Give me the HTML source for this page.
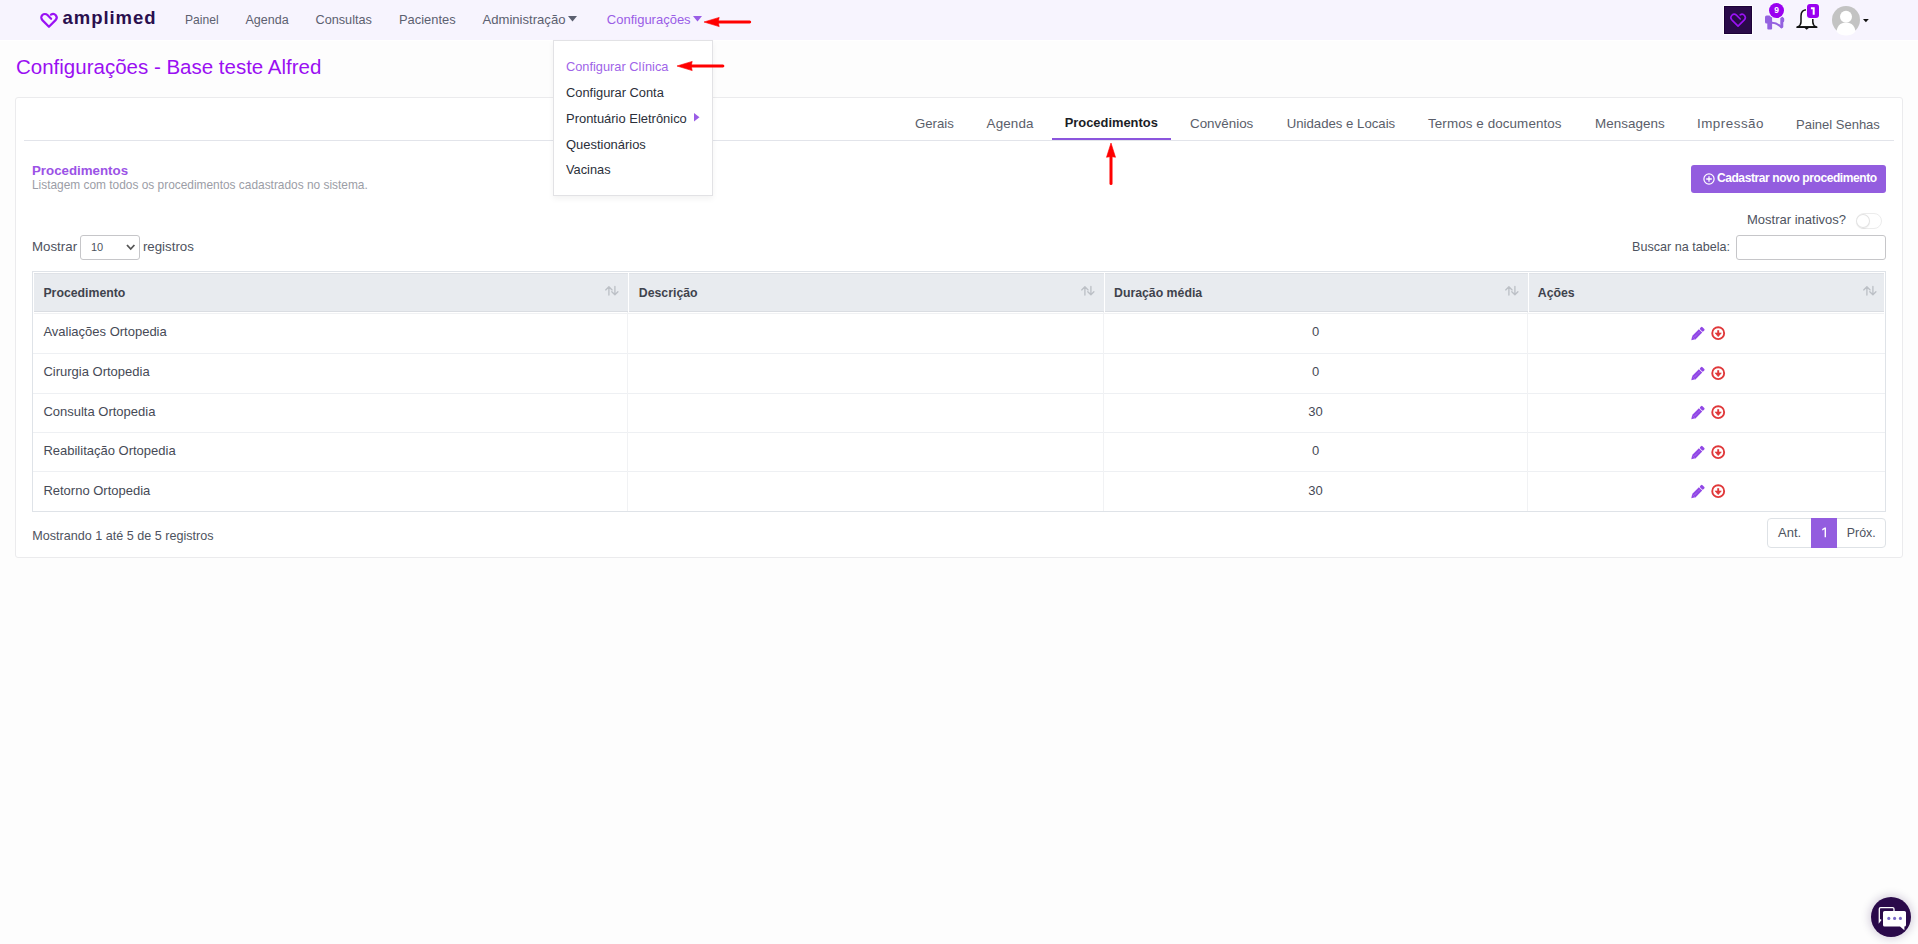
<!DOCTYPE html>
<html><head><meta charset="utf-8">
<style>
*{box-sizing:border-box;margin:0;padding:0}
html,body{width:1918px;height:944px;overflow:hidden;background:#fdfdfd;font-family:"Liberation Sans",sans-serif}
body{position:relative}
.t{position:absolute;white-space:nowrap;line-height:1}
.r{position:absolute}
svg{position:absolute;overflow:visible}
</style></head><body>
<div class="r" style="left:0px;top:0px;width:1918px;height:40px;background:#f7f4fe"></div>
<div class="r" style="left:0px;top:40px;width:1918px;height:1px;background:#ffffff"></div>
<svg style="left:36px;top:9px" width="26" height="22" viewBox="36 9 26 22"><path d="M51.12 18.73 L47.45 15.05 A3.6 3.6 0 0 0 42.35 20.15 L48.95 26.74 L55.55 20.15 A3.6 3.6 0 0 0 50.94 14.65" fill="none" stroke="#9a12f4" stroke-width="2.2" stroke-linecap="round" stroke-linejoin="round"/></svg>
<div class="t" style="left:62.5px;top:9.14px;font-size:18.5px;color:#2a0f4e;font-weight:bold;letter-spacing:0.95px;">amplimed</div>
<div class="t" style="left:185px;top:13.76px;font-size:12.1px;color:#5c6070;">Painel</div>
<div class="t" style="left:245.5px;top:13.92px;font-size:12.5px;color:#5c6070;">Agenda</div>
<div class="t" style="left:315.5px;top:13.75px;font-size:12.7px;color:#5c6070;">Consultas</div>
<div class="t" style="left:399px;top:13.58px;font-size:12.9px;color:#5c6070;">Pacientes</div>
<div class="t" style="left:482.5px;top:12.91px;font-size:13.1px;color:#5c6070;">Administração</div>
<div class="t" style="left:606.8px;top:13.00px;font-size:13px;color:#9a5de6;">Configurações</div>
<svg style="left:568px;top:16px" width="9" height="6"><path d="M0 0 L9 0 L4.5 5.5 Z" fill="#5c6070"/></svg>
<svg style="left:692.5px;top:16px" width="9" height="6"><path d="M0 0 L9 0 L4.5 5.5 Z" fill="#9a5de6"/></svg>
<svg style="left:701.8px;top:15.399999999999999px" width="53.200000000000045" height="14" viewBox="701.8 15.399999999999999 53.200000000000045 14"><path d="M703.8 22.4 L719.0 17.799999999999997 L718.0 22.4 L719.0 27.0 Z" fill="#ff0000" stroke="#ff0000" stroke-width="0.6" stroke-linejoin="round"/><path d="M715.8 22.4 L749.5 22.4" stroke="#ff0000" stroke-width="3" stroke-linecap="round"/></svg>
<div class="r" style="left:1723px;top:5px;width:30px;height:30px;background:#fff;border-radius:1px"></div>
<div class="r" style="left:1724px;top:6px;width:28px;height:28px;background:#2a0a4a;border:1px solid #1c0038"></div>
<svg style="left:1726px;top:9px" width="24" height="22" viewBox="1726 9 24 22"><path d="M1740.25 18.98 L1736.43 15.17 A3.3 3.3 0 0 0 1731.77 19.83 L1738.05 26.12 L1744.33 19.83 A3.3 3.3 0 0 0 1740.11 14.80" fill="none" stroke="#9a12f4" stroke-width="1.6" stroke-linecap="round" stroke-linejoin="round"/></svg>
<svg style="left:1764.5px;top:14.5px" width="20" height="16" viewBox="0 0 20 16"><rect x="0" y="0.6" width="7.1" height="7.9" rx="1.6" fill="#9461e0"/><rect x="2.3" y="6" width="4.8" height="8.4" rx="0.9" fill="#9461e0"/><path d="M7 7.7 Q12.5 8 16.4 12.4" fill="none" stroke="#9461e0" stroke-width="2" stroke-linecap="round"/><path d="M7 2 L16 -0.5" fill="none" stroke="#9461e0" stroke-width="1.9"/><rect x="15.3" y="1.5" width="3" height="11.6" rx="1.4" fill="#9461e0"/><rect x="17" y="2.8" width="2.2" height="4.4" rx="1.1" fill="#9461e0"/></svg>
<div class="r" style="left:1768px;top:2px;width:17px;height:17px;border-radius:50%;background:#f8f5fd"></div>
<div class="r" style="left:1769px;top:3px;width:15px;height:15px;border-radius:50%;background:#9a00f0"></div>
<div class="t" style="left:1576.6px;width:400px;text-align:center;top:6.10px;font-size:8.5px;color:#fff;font-weight:bold;">9</div>
<svg style="left:1796px;top:9px" width="22" height="22" viewBox="1796 9 22 22"><path d="M1807 9.8 C1803 9.8 1801 12.5 1801 16 L1801 22 C1801 24.6 1799.6 26 1797.6 27.1 L1816.2 27.1 C1814.2 26 1812.8 24.6 1812.8 22 L1812.8 16 C1812.8 12.5 1811 9.8 1807 9.8 Z" fill="#fff" stroke="#111" stroke-width="1.5" stroke-linejoin="round"/><path d="M1797.2 27.2 L1816.6 27.2" stroke="#111" stroke-width="1.8" stroke-linecap="round"/><path d="M1804.6 28 L1808.8 28 L1806.7 29.8 Z" fill="#111"/></svg>
<div class="r" style="left:1806px;top:3px;width:14px;height:16px;border-radius:3.5px;background:#fbf9fe"></div>
<div class="r" style="left:1807px;top:4px;width:12px;height:14px;border-radius:3px;background:#9a00f0"></div>
<svg style="left:1807px;top:4px" width="12" height="14" viewBox="1807 4 12 14"><path d="M1810.9 7.3 L1814.7 7.3 L1814.7 14.7 L1812.7 14.7 L1812.7 9.2 L1810.9 9.2 Z" fill="#fff"/></svg>
<svg style="left:1832px;top:6px" width="28" height="28" viewBox="0 0 28 28"><circle cx="14" cy="14" r="14" fill="#c3c3c3"/><circle cx="14" cy="10.8" r="6" fill="#fff"/><path d="M4.5 25.5 C5.5 18 10 16.8 14 16.8 C18 16.8 22.5 18 23.5 25.5 C21 28.5 17 29.5 14 29.5 C11 29.5 7 28.5 4.5 25.5 Z" fill="#fff"/></svg>
<svg style="left:1863px;top:19px" width="6" height="4"><path d="M0 0 L5.8 0 L2.9 3.2 Z" fill="#111"/></svg>
<div class="t" style="left:16px;top:56.65px;font-size:20.5px;color:#9a0ff2;">Configurações - Base teste Alfred</div>
<div class="r" style="left:15px;top:97px;width:1888px;height:461px;background:#fff;border:1px solid #ebebed;border-radius:3px"></div>
<div class="r" style="left:24px;top:140px;width:1870px;height:1px;background:#e2e4ea"></div>
<div class="t" style="left:915px;top:117.43px;font-size:13.2px;color:#5a5e6a;">Gerais</div>
<div class="t" style="left:986.6px;top:117.26px;font-size:13.4px;color:#5a5e6a;letter-spacing:0.15px;">Agenda</div>
<div class="t" style="left:1190px;top:117.26px;font-size:13.4px;color:#5a5e6a;">Convênios</div>
<div class="t" style="left:1286.7px;top:117.43px;font-size:13.2px;color:#5a5e6a;">Unidades e Locais</div>
<div class="t" style="left:1428px;top:117.26px;font-size:13.4px;color:#5a5e6a;letter-spacing:0.1px;">Termos e documentos</div>
<div class="t" style="left:1595px;top:117.26px;font-size:13.4px;color:#5a5e6a;letter-spacing:0.05px;">Mensagens</div>
<div class="t" style="left:1697px;top:117.26px;font-size:13.4px;color:#5a5e6a;letter-spacing:0.5px;">Impressão</div>
<div class="t" style="left:1796px;top:117.60px;font-size:13px;color:#5a5e6a;">Painel Senhas</div>
<div class="t" style="left:1064.7px;top:117.38px;font-size:12.9px;color:#1b1d26;font-weight:bold;">Procedimentos</div>
<div class="r" style="left:1052px;top:138px;width:119px;height:2px;background:#8b55dd"></div>
<div class="t" style="left:32px;top:164.04px;font-size:13.3px;color:#9b52e6;font-weight:bold;">Procedimentos</div>
<div class="t" style="left:32px;top:179.93px;font-size:11.9px;color:#9b9da6;">Listagem com todos os procedimentos cadastrados no sistema.</div>
<div class="r" style="left:1691px;top:165px;width:195px;height:28px;background:#935ddf;border-radius:3px"></div>
<svg style="left:1702.5px;top:172.6px" width="12" height="12" viewBox="0 0 12 12"><circle cx="6" cy="6" r="5.1" fill="none" stroke="#fff" stroke-width="1.2"/><path d="M6 3.2 L6 8.8 M3.2 6 L8.8 6" stroke="#fff" stroke-width="1.3"/></svg>
<div class="t" style="left:1716.9px;top:172.14px;font-size:12px;color:#fff;font-weight:bold;letter-spacing:-0.4px;">Cadastrar novo procedimento</div>
<svg style="left:1104.4px;top:141px" width="14" height="48" viewBox="1104.4 141 14 48"><path d="M1111.4 143 L1106.9 157.3 L1111.4 156.5 L1115.9 157.3 Z" fill="#ff0000" stroke="#ff0000" stroke-width="0.6" stroke-linejoin="round"/><path d="M1111.4 154 L1111.4 183.5" stroke="#ff0000" stroke-width="3" stroke-linecap="round"/></svg>
<div class="t" style="left:1747px;top:212.80px;font-size:13px;color:#4e5360;">Mostrar inativos?</div>
<div class="r" style="left:1856px;top:213px;width:26px;height:16px;border:1px solid #ececec;border-radius:8px;background:#fff"></div>
<div class="r" style="left:1856px;top:214px;width:14px;height:14px;border-radius:50%;background:#fff;box-shadow:0 0 0 1px #e2e2e2 inset,0 1px 1px rgba(0,0,0,.06)"></div>
<div class="t" style="left:32px;top:240.24px;font-size:13.3px;color:#4e5360;">Mostrar</div>
<div class="r" style="left:80px;top:235px;width:60px;height:25px;border:1px solid #c6c6c9;border-radius:3px;background:#fff"></div>
<div class="t" style="left:91px;top:241.69px;font-size:11px;color:#4e5360;">10</div>
<svg style="left:125.5px;top:244px" width="10" height="7"><path d="M1 1 L4.7 5 L8.4 1" fill="none" stroke="#555" stroke-width="1.8"/></svg>
<div class="t" style="left:142.9px;top:239.74px;font-size:13.3px;color:#4e5360;">registros</div>
<div class="t" style="left:1632px;top:241.13px;font-size:12.6px;color:#4e5360;">Buscar na tabela:</div>
<div class="r" style="left:1736px;top:235px;width:150px;height:25px;border:1px solid #c6c6c9;border-radius:3px;background:#fff"></div>
<div class="r" style="left:32px;top:271px;width:1854px;height:241px;border:1px solid #dfe3e8;background:#fff"></div>
<div class="r" style="left:34px;top:273px;width:594px;height:39px;background:#e8ebef;border-top:1px solid #dfe2e7;border-bottom:1px solid #dadde2"></div>
<div class="r" style="left:629px;top:273px;width:475px;height:39px;background:#e8ebef;border-top:1px solid #dfe2e7;border-bottom:1px solid #dadde2"></div>
<div class="r" style="left:1105px;top:273px;width:423px;height:39px;background:#e8ebef;border-top:1px solid #dfe2e7;border-bottom:1px solid #dadde2"></div>
<div class="r" style="left:1529px;top:273px;width:355px;height:39px;background:#e8ebef;border-top:1px solid #dfe2e7;border-bottom:1px solid #dadde2"></div>
<div class="t" style="left:43.4px;top:286.79px;font-size:12.3px;color:#3f434d;font-weight:bold;">Procedimento</div>
<div class="t" style="left:638.8px;top:286.79px;font-size:12.3px;color:#3f434d;font-weight:bold;">Descrição</div>
<div class="t" style="left:1114px;top:286.79px;font-size:12.3px;color:#3f434d;font-weight:bold;">Duração média</div>
<div class="t" style="left:1537.8px;top:286.79px;font-size:12.3px;color:#3f434d;font-weight:bold;">Ações</div>
<svg style="left:605px;top:286px" width="14" height="10" viewBox="0 0 14 10"><path d="M3.9 9 L3.9 0.9 M0.7 3.9 L3.9 0.7 L7.1 3.9 M9.9 0.5 L9.9 8.6 M6.8 5.7 L9.9 8.8 L12.9 5.7" fill="none" stroke="#bcc0c6" stroke-width="1.35" stroke-linecap="round" stroke-linejoin="round"/></svg>
<svg style="left:1081px;top:286px" width="14" height="10" viewBox="0 0 14 10"><path d="M3.9 9 L3.9 0.9 M0.7 3.9 L3.9 0.7 L7.1 3.9 M9.9 0.5 L9.9 8.6 M6.8 5.7 L9.9 8.8 L12.9 5.7" fill="none" stroke="#bcc0c6" stroke-width="1.35" stroke-linecap="round" stroke-linejoin="round"/></svg>
<svg style="left:1505px;top:286px" width="14" height="10" viewBox="0 0 14 10"><path d="M3.9 9 L3.9 0.9 M0.7 3.9 L3.9 0.7 L7.1 3.9 M9.9 0.5 L9.9 8.6 M6.8 5.7 L9.9 8.8 L12.9 5.7" fill="none" stroke="#bcc0c6" stroke-width="1.35" stroke-linecap="round" stroke-linejoin="round"/></svg>
<svg style="left:1862.5px;top:286px" width="14" height="10" viewBox="0 0 14 10"><path d="M3.9 9 L3.9 0.9 M0.7 3.9 L3.9 0.7 L7.1 3.9 M9.9 0.5 L9.9 8.6 M6.8 5.7 L9.9 8.8 L12.9 5.7" fill="none" stroke="#bcc0c6" stroke-width="1.35" stroke-linecap="round" stroke-linejoin="round"/></svg>
<div class="r" style="left:34px;top:313px;width:1850px;height:1px;background:#f0f1f3"></div>
<div class="r" style="left:33px;top:353px;width:1852px;height:1px;background:#eef0f3"></div>
<div class="r" style="left:33px;top:392.5px;width:1852px;height:1px;background:#eef0f3"></div>
<div class="r" style="left:33px;top:432px;width:1852px;height:1px;background:#eef0f3"></div>
<div class="r" style="left:33px;top:471px;width:1852px;height:1px;background:#eef0f3"></div>
<div class="r" style="left:627px;top:312px;width:1px;height:199px;background:#f1f2f4"></div>
<div class="r" style="left:1103px;top:312px;width:1px;height:199px;background:#f1f2f4"></div>
<div class="r" style="left:1527px;top:312px;width:1px;height:199px;background:#f1f2f4"></div>
<div class="t" style="left:43.4px;top:325.10px;font-size:13px;color:#464a56;">Avaliações Ortopedia</div>
<div class="t" style="left:1115.5px;width:400px;text-align:center;top:325.10px;font-size:13px;color:#464a56;">0</div>
<svg style="left:1686px;top:320.5px" width="24" height="20" viewBox="1686 320.5 24 20"><g transform="translate(1691.3 339.7) rotate(-45)"><path d="M0 0 L3.6 -2.35 L3.6 2.35 Z" fill="#9147e6"/><rect x="3.5" y="-2.35" width="9.6" height="4.7" fill="#9147e6"/><rect x="13.8" y="-2.35" width="3.3" height="4.7" rx="1.1" fill="#9147e6"/><path d="M4.5 0 L12.5 0" stroke="#fff" stroke-opacity="0.55" stroke-width="0.6" stroke-dasharray="0.9 1"/></g></svg>
<svg style="left:1708px;top:320.5px" width="20" height="20" viewBox="1708 320.5 20 20"><circle cx="1718.2" cy="332.65" r="5.95" fill="none" stroke="#e0383a" stroke-width="1.9"/><rect x="1717.25" y="329.7" width="1.9" height="3.2" fill="#e0383a"/><path d="M1715 332.4 L1721.4 332.4 L1718.2 336.2 Z" fill="#e0383a" stroke="#e0383a" stroke-width="0.5" stroke-linejoin="round"/></svg>
<div class="t" style="left:43.4px;top:365.35px;font-size:13px;color:#464a56;">Cirurgia Ortopedia</div>
<div class="t" style="left:1115.5px;width:400px;text-align:center;top:365.35px;font-size:13px;color:#464a56;">0</div>
<svg style="left:1686px;top:360.75px" width="24" height="20" viewBox="1686 360.75 24 20"><g transform="translate(1691.3 379.95) rotate(-45)"><path d="M0 0 L3.6 -2.35 L3.6 2.35 Z" fill="#9147e6"/><rect x="3.5" y="-2.35" width="9.6" height="4.7" fill="#9147e6"/><rect x="13.8" y="-2.35" width="3.3" height="4.7" rx="1.1" fill="#9147e6"/><path d="M4.5 0 L12.5 0" stroke="#fff" stroke-opacity="0.55" stroke-width="0.6" stroke-dasharray="0.9 1"/></g></svg>
<svg style="left:1708px;top:360.75px" width="20" height="20" viewBox="1708 360.75 20 20"><circle cx="1718.2" cy="372.9" r="5.95" fill="none" stroke="#e0383a" stroke-width="1.9"/><rect x="1717.25" y="369.95" width="1.9" height="3.2" fill="#e0383a"/><path d="M1715 372.65 L1721.4 372.65 L1718.2 376.45 Z" fill="#e0383a" stroke="#e0383a" stroke-width="0.5" stroke-linejoin="round"/></svg>
<div class="t" style="left:43.4px;top:404.85px;font-size:13px;color:#464a56;">Consulta Ortopedia</div>
<div class="t" style="left:1115.5px;width:400px;text-align:center;top:404.85px;font-size:13px;color:#464a56;">30</div>
<svg style="left:1686px;top:400.25px" width="24" height="20" viewBox="1686 400.25 24 20"><g transform="translate(1691.3 419.45) rotate(-45)"><path d="M0 0 L3.6 -2.35 L3.6 2.35 Z" fill="#9147e6"/><rect x="3.5" y="-2.35" width="9.6" height="4.7" fill="#9147e6"/><rect x="13.8" y="-2.35" width="3.3" height="4.7" rx="1.1" fill="#9147e6"/><path d="M4.5 0 L12.5 0" stroke="#fff" stroke-opacity="0.55" stroke-width="0.6" stroke-dasharray="0.9 1"/></g></svg>
<svg style="left:1708px;top:400.25px" width="20" height="20" viewBox="1708 400.25 20 20"><circle cx="1718.2" cy="412.4" r="5.95" fill="none" stroke="#e0383a" stroke-width="1.9"/><rect x="1717.25" y="409.45" width="1.9" height="3.2" fill="#e0383a"/><path d="M1715 412.15 L1721.4 412.15 L1718.2 415.95 Z" fill="#e0383a" stroke="#e0383a" stroke-width="0.5" stroke-linejoin="round"/></svg>
<div class="t" style="left:43.4px;top:444.10px;font-size:13px;color:#464a56;">Reabilitação Ortopedia</div>
<div class="t" style="left:1115.5px;width:400px;text-align:center;top:444.10px;font-size:13px;color:#464a56;">0</div>
<svg style="left:1686px;top:439.5px" width="24" height="20" viewBox="1686 439.5 24 20"><g transform="translate(1691.3 458.7) rotate(-45)"><path d="M0 0 L3.6 -2.35 L3.6 2.35 Z" fill="#9147e6"/><rect x="3.5" y="-2.35" width="9.6" height="4.7" fill="#9147e6"/><rect x="13.8" y="-2.35" width="3.3" height="4.7" rx="1.1" fill="#9147e6"/><path d="M4.5 0 L12.5 0" stroke="#fff" stroke-opacity="0.55" stroke-width="0.6" stroke-dasharray="0.9 1"/></g></svg>
<svg style="left:1708px;top:439.5px" width="20" height="20" viewBox="1708 439.5 20 20"><circle cx="1718.2" cy="451.65" r="5.95" fill="none" stroke="#e0383a" stroke-width="1.9"/><rect x="1717.25" y="448.7" width="1.9" height="3.2" fill="#e0383a"/><path d="M1715 451.4 L1721.4 451.4 L1718.2 455.2 Z" fill="#e0383a" stroke="#e0383a" stroke-width="0.5" stroke-linejoin="round"/></svg>
<div class="t" style="left:43.4px;top:483.60px;font-size:13px;color:#464a56;">Retorno Ortopedia</div>
<div class="t" style="left:1115.5px;width:400px;text-align:center;top:483.60px;font-size:13px;color:#464a56;">30</div>
<svg style="left:1686px;top:479.0px" width="24" height="20" viewBox="1686 479.0 24 20"><g transform="translate(1691.3 498.2) rotate(-45)"><path d="M0 0 L3.6 -2.35 L3.6 2.35 Z" fill="#9147e6"/><rect x="3.5" y="-2.35" width="9.6" height="4.7" fill="#9147e6"/><rect x="13.8" y="-2.35" width="3.3" height="4.7" rx="1.1" fill="#9147e6"/><path d="M4.5 0 L12.5 0" stroke="#fff" stroke-opacity="0.55" stroke-width="0.6" stroke-dasharray="0.9 1"/></g></svg>
<svg style="left:1708px;top:479.0px" width="20" height="20" viewBox="1708 479.0 20 20"><circle cx="1718.2" cy="491.15" r="5.95" fill="none" stroke="#e0383a" stroke-width="1.9"/><rect x="1717.25" y="488.2" width="1.9" height="3.2" fill="#e0383a"/><path d="M1715 490.9 L1721.4 490.9 L1718.2 494.7 Z" fill="#e0383a" stroke="#e0383a" stroke-width="0.5" stroke-linejoin="round"/></svg>
<div class="t" style="left:32.3px;top:530.13px;font-size:12.6px;color:#4e5360;">Mostrando 1 até 5 de 5 registros</div>
<div class="r" style="left:1767px;top:518px;width:119px;height:30px;border:1px solid #dee2e6;border-radius:4px;background:#fff"></div>
<div class="r" style="left:1811px;top:518px;width:26px;height:30px;background:#935ddf"></div>
<div class="t" style="left:1778px;top:526.10px;font-size:13px;color:#4e5360;">Ant.</div>
<svg style="left:1811px;top:518px" width="26" height="30" viewBox="1811 518 26 30"><path d="M1822.2 528.9 L1824.7 527.4 L1826 527.4 L1826 537.2 L1824.6 537.2 L1824.6 529.3 L1822.2 530.4 Z" fill="#fff"/></svg>
<div class="t" style="left:1846.8px;top:526.60px;font-size:12.4px;color:#4e5360;">Próx.</div>
<div class="r" style="left:553px;top:40px;width:160px;height:156px;background:#fff;border:1px solid #e2e2e5;box-shadow:0 3px 6px rgba(0,0,0,.05)"></div>
<div class="t" style="left:566px;top:60.66px;font-size:12.8px;color:#a064e8;">Configurar Clínica</div>
<div class="t" style="left:566px;top:86.62px;font-size:12.85px;color:#2b2f3a;">Configurar Conta</div>
<div class="t" style="left:566px;top:112.64px;font-size:12.95px;color:#2b2f3a;">Prontuário Eletrônico</div>
<div class="t" style="left:566px;top:138.84px;font-size:12.95px;color:#2b2f3a;">Questionários</div>
<div class="t" style="left:566px;top:164.36px;font-size:12.8px;color:#2b2f3a;">Vacinas</div>
<svg style="left:694px;top:113px" width="6" height="9"><path d="M0 0 L5.5 4.3 L0 8.6 Z" fill="#9a5de6"/></svg>
<svg style="left:674.6px;top:59.400000000000006px" width="53.39999999999998" height="14" viewBox="674.6 59.400000000000006 53.39999999999998 14"><path d="M676.6 66.4 L691.8000000000001 61.800000000000004 L690.8000000000001 66.4 L691.8000000000001 71.0 Z" fill="#ff0000" stroke="#ff0000" stroke-width="0.6" stroke-linejoin="round"/><path d="M688.6 66.4 L722.5 66.4" stroke="#ff0000" stroke-width="3" stroke-linecap="round"/></svg>
<div class="r" style="left:1871px;top:897px;width:40px;height:40px;border-radius:50%;background:#2a0a4a;box-shadow:0 0 8px 2px rgba(40,10,80,.18)"></div>
<svg style="left:1871px;top:897px" width="40" height="40" viewBox="1871 897 40 40"><path d="M1881 919.5 L1879.3 921.8 L1879.3 909 Q1879.3 907.6 1880.7 907.6 L1892.6 907.6 Q1894 907.6 1894 909 L1894 911" fill="none" stroke="#fff" stroke-width="1.3"/><path d="M1884.6 911 L1904.4 911 Q1906 911 1906 912.6 L1906 925 Q1906 926.6 1904.4 926.6 L1904.4 930.2 L1900 926.6 L1884.6 926.6 Q1883 926.6 1883 925 L1883 912.6 Q1883 911 1884.6 911 Z" fill="#fff"/><circle cx="1888.8" cy="918.4" r="1.55" fill="#7868c6"/><circle cx="1894.6" cy="918.4" r="1.55" fill="#7868c6"/><circle cx="1900.4" cy="918.4" r="1.55" fill="#7868c6"/></svg>
</body></html>
